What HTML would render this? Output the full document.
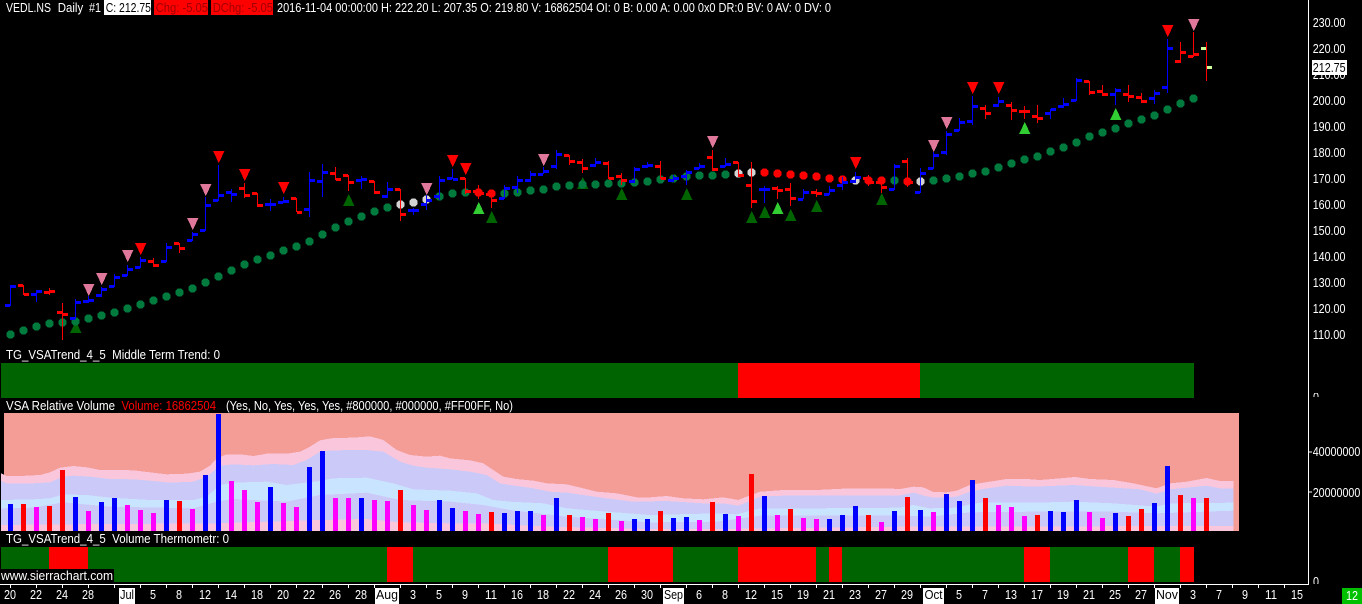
<!DOCTYPE html>
<html><head><meta charset="utf-8"><title>VEDL.NS Daily</title>
<style>
html,body{margin:0;padding:0;background:#000;width:1362px;height:604px;overflow:hidden}
svg{display:block}
text{font-family:"Liberation Sans",sans-serif;font-size:13px;fill:#fff}
.c text{text-anchor:middle}
</style></head><body>
<svg width="1362" height="604" viewBox="0 0 1362 604" xmlns="http://www.w3.org/2000/svg">
<rect width="1362" height="604" fill="#000"/>

<!-- header -->
<text x="6" y="12" textLength="45" lengthAdjust="spacingAndGlyphs">VEDL.NS</text>
<text x="57.7" y="12" textLength="25.5" lengthAdjust="spacingAndGlyphs">Daily</text>
<text x="89" y="12" textLength="12" lengthAdjust="spacingAndGlyphs">#1</text>
<rect x="104" y="0" width="47" height="15" fill="#fff"/>
<text x="105.7" y="12" textLength="45.3" lengthAdjust="spacingAndGlyphs" style="fill:#000">C: 212.75</text>
<rect x="154" y="0" width="54" height="15" fill="#f00"/>
<text x="155.7" y="12" textLength="52.3" lengthAdjust="spacingAndGlyphs" style="fill:#a00000">Chg: -5.05</text>
<rect x="211" y="0" width="62" height="15" fill="#f00"/>
<text x="212.7" y="12" textLength="60.3" lengthAdjust="spacingAndGlyphs" style="fill:#a00000">DChg: -5.05</text>
<text x="277" y="12" textLength="554" lengthAdjust="spacingAndGlyphs">2016-11-04 00:00:00 H: 222.20 L: 207.35 O: 219.80 V: 16862504 OI: 0 B: 0.00 A: 0.00 0x0 DR:0 BV: 0 AV: 0 DV: 0</text>

<!-- triangles -->
<g fill="#e0789c" shape-rendering="crispEdges">
<path d="M83 284h11.5l-5.7 12z"/><path d="M96 273h11.5l-5.7 12z"/><path d="M122 250h11.5l-5.7 12z"/><path d="M187 218h11.5l-5.7 12z"/><path d="M200 184h11.5l-5.7 12z"/><path d="M421 183h11.5l-5.7 12z"/><path d="M538 154h11.5l-5.7 12z"/><path d="M707 136h11.5l-5.7 12z"/><path d="M928 140h11.5l-5.7 12z"/><path d="M941 117h11.5l-5.7 12z"/><path d="M1188 19h11.5l-5.7 12z"/>
</g>
<g fill="#f00" shape-rendering="crispEdges">
<path d="M135 243h11.5l-5.7 12z"/><path d="M213 151h11.5l-5.7 12z"/><path d="M239 169h11.5l-5.7 12z"/><path d="M278 182h11.5l-5.7 12z"/><path d="M447 155h11.5l-5.7 12z"/><path d="M460 163h11.5l-5.7 12z"/><path d="M850 157h11.5l-5.7 12z"/><path d="M967 82h11.5l-5.7 12z"/><path d="M993 82h11.5l-5.7 12z"/><path d="M1162 25h11.5l-5.7 12z"/>
</g>
<g fill="#006400" shape-rendering="crispEdges">
<path d="M70 333h11.5l-5.7-12z"/><path d="M343 206h11.5l-5.7-12z"/><path d="M486 223h11.5l-5.7-12z"/><path d="M577 189h11.5l-5.7-12z"/><path d="M616 200h11.5l-5.7-12z"/><path d="M681 200h11.5l-5.7-12z"/><path d="M746 223h11.5l-5.7-12z"/><path d="M759 218h11.5l-5.7-12z"/><path d="M785 221h11.5l-5.7-12z"/><path d="M811 212h11.5l-5.7-12z"/><path d="M876 205h11.5l-5.7-12z"/>
</g>
<g fill="#32cd32" shape-rendering="crispEdges">
<path d="M473 214h11.5l-5.7-12z"/><path d="M772 214h11.5l-5.7-12z"/><path d="M1019 134h11.5l-5.7-12z"/><path d="M1110 120h11.5l-5.7-12z"/>
</g>

<!-- trend dots -->
<g transform="translate(.5,.5)" fill="none" stroke-width="8.4" stroke-linecap="round" shape-rendering="crispEdges">
<path stroke="#007a3d" d="M10 334h.01M23 330h.01M36 326h.01M49 323h.01M62 322h.01M75 321h.01M88 318h.01M101 315h.01M114 312h.01M127 308h.01M140 304h.01M153 300h.01M166 296h.01M179 292h.01M192 288h.01M205 282h.01M218 276h.01M231 270h.01M244 264h.01M257 259h.01M270 255h.01M283 250h.01M296 246h.01M309 241h.01M322 234h.01M335 227h.01M348 221h.01M361 216h.01M374 211h.01M387 207h.01M439 196h.01M452 193h.01M465 192h.01M504 193h.01M517 192h.01M530 190h.01M543 189h.01M556 186h.01M569 185h.01M582 184h.01M595 184h.01M608 183h.01M621 183h.01M634 182h.01M647 181h.01M660 179h.01M673 178h.01M686 176h.01M699 175h.01M712 175h.01M725 174h.01M894 180h.01M933 180h.01M946 178h.01M959 176h.01M972 173h.01M985 171h.01M998 167h.01M1011 163h.01M1024 159h.01M1037 156h.01M1050 151h.01M1063 147h.01M1076 142h.01M1089 136h.01M1102 132h.01M1115 128h.01M1128 123h.01M1141 119h.01M1154 115h.01M1167 109h.01M1180 103h.01M1193 98h.01"/>
<path stroke="#d3d3d3" d="M400 204h.01M413 202h.01M426 199h.01M738 173h.01M751 172h.01M855 180h.01M920 181h.01"/>
<path stroke="#f00" d="M478 192h.01M491 193h.01M764 172h.01M777 173h.01M790 174h.01M803 175h.01M816 176h.01M829 178h.01M842 179h.01M868 180h.01M881 180h.01M907 181h.01"/>
</g>

<!-- price bars -->
<g fill="none" shape-rendering="crispEdges">
<path transform="translate(.5,0)" stroke="#00f" d="M10 285V306M36 290V302M75 299V319M88 296V303M101 287V297M114 274V287M127 265V276M140 257V268M166 243V262M192 232V241M205 197V231M218 165V201M231 189V202M270 199V211M283 197V203M309 172V217M322 164V197M361 176V189M387 182V198M413 208V215M426 195V210M439 176V200M452 169V179M504 185V199M517 176V193M530 171V182M543 167V174M556 150V169M595 158V167M634 167V183M647 162V168M673 175V182M686 170V185M699 163V169M725 158V167M764 186V203M803 189V199M829 186V195M842 177V190M855 172V183M894 164V190M920 168V193M933 152V169M946 131V155M959 118V131M972 96V125M998 97V107M1050 109V119M1063 98V108M1076 78V101M1115 88V105M1154 90V104M1167 39V93"/>
<path transform="translate(0,.5)" stroke="#00f" stroke-width="3" d="M5 305h5M11 286h5M31 294h5M37 291h5M70 318h5M76 302h5M83 301h5M89 300h5M96 295h5M102 289h5M109 286h5M115 277h5M122 275h5M128 269h5M135 267h5M141 260h5M161 261h5M167 247h5M187 240h5M193 234h5M200 230h5M206 205h5M213 200h5M219 195h5M226 192h5M232 194h5M265 204h5M271 204h5M278 202h5M284 201h5M304 209h5M310 180h5M317 181h5M323 172h5M356 180h5M362 179h5M382 196h5M388 189h5M408 210h5M414 210h5M421 204h5M427 200h5M434 196h5M440 180h5M447 178h5M453 179h5M499 198h5M505 188h5M512 187h5M518 180h5M525 180h5M531 174h5M538 174h5M544 171h5M551 166h5M557 154h5M590 165h5M596 162h5M629 181h5M635 169h5M642 166h5M648 165h5M668 180h5M674 178h5M681 176h5M687 172h5M694 168h5M700 166h5M720 166h5M726 164h5M759 189h5M765 189h5M798 199h5M804 192h5M824 194h5M830 190h5M837 185h5M843 182h5M850 181h5M856 177h5M889 189h5M895 166h5M915 192h5M921 173h5M928 168h5M934 155h5M941 152h5M947 134h5M954 130h5M960 122h5M967 121h5M973 106h5M993 105h5M999 101h5M1045 113h5M1051 109h5M1058 106h5M1064 104h5M1071 100h5M1077 80h5M1110 94h5M1116 90h5M1149 98h5M1155 93h5M1162 87h5M1168 48h5"/>
<path transform="translate(.5,0)" stroke="#f00" d="M23 285V295M49 288V295M62 303V340M153 258V267M179 243V253M244 183V198M257 193V207M296 198V212M335 167V180M348 175V191M374 181V194M400 189V221M465 178V194M478 185V199M491 193V208M569 155V165M582 159V173M608 161V179M621 173V185M660 161V179M712 150V171M738 162V177M751 162V208M777 186V199M790 183V206M816 189V197M868 175V186M881 182V193M907 158V187M985 105V119M1011 102V120M1024 106V119M1037 105V123M1089 81V95M1102 85V96M1128 85V102M1141 93V103M1180 42V63M1193 32V57M1206 42V81"/>
<path transform="translate(0,.5)" stroke="#f00" stroke-width="3" d="M18 285h5M24 294h5M44 292h5M50 291h5M57 312h5M63 314h5M148 261h5M154 265h5M174 243h5M180 248h5M239 188h5M245 195h5M252 193h5M258 205h5M291 198h5M297 212h5M330 173h5M336 179h5M343 175h5M349 182h5M369 181h5M375 192h5M395 189h5M401 214h5M460 178h5M466 191h5M473 191h5M479 193h5M486 194h5M492 200h5M564 155h5M570 161h5M577 162h5M583 168h5M603 163h5M609 178h5M616 176h5M622 180h5M655 166h5M661 178h5M707 157h5M713 169h5M733 162h5M739 175h5M746 185h5M752 201h5M772 188h5M778 190h5M785 189h5M791 198h5M811 192h5M817 193h5M863 178h5M869 182h5M876 182h5M882 187h5M902 161h5M908 182h5M980 108h5M986 113h5M1006 105h5M1012 110h5M1019 111h5M1025 111h5M1032 116h5M1038 118h5M1084 81h5M1090 92h5M1097 91h5M1103 94h5M1123 94h5M1129 96h5M1136 97h5M1142 101h5M1175 61h5M1181 52h5M1188 56h5M1194 54h5"/>
<path transform="translate(0,.5)" stroke="#ccff99" stroke-width="3" d="M1201 48h5M1207 67h5"/>
</g>

<!-- middle term trend -->
<text x="6" y="359" textLength="214" lengthAdjust="spacingAndGlyphs">TG_VSATrend_4_5&#160;&#160;Middle Term Trend: 0</text>
<g shape-rendering="crispEdges">
<rect x="1" y="363" width="1193" height="35" fill="#006400"/>
<rect x="738" y="363" width="182" height="35" fill="#f00"/>
</g>

<!-- VSA relative volume -->
<text x="6" y="410" textLength="109" lengthAdjust="spacingAndGlyphs">VSA Relative Volume</text>
<text x="121.5" y="410" textLength="94.5" lengthAdjust="spacingAndGlyphs" style="fill:#f00">Volume: 16862504</text>
<text x="226" y="410" textLength="287" lengthAdjust="spacingAndGlyphs">(Yes, No, Yes, Yes, Yes, #800000, #000000, #FF00FF, No)</text>
<g shape-rendering="crispEdges">
<rect x="4" y="413" width="1235" height="118" fill="#f49c96"/>
<svg x="0" y="395" width="450" height="209" viewBox="0 0 1350 627" preserveAspectRatio="none">
<polygon fill="#f9c6dc" points="3,235 20,243 60,243 120,240 150,232 180,218 220,213 260,217 300,225 350,225 400,226 450,232 500,238 560,236 600,230 630,212 650,190 680,178 720,178 760,183 800,176 860,176 900,170 930,155 960,136 1000,129 1060,128 1110,124 1150,135 1190,165 1230,180 1280,185 1320,182 1350,190 1350,408 3,408"/>
<polygon fill="#cbc9f7" points="3,258 20,265 100,265 150,262 190,245 220,242 270,245 330,252 400,253 450,257 510,263 580,260 620,245 660,212 700,208 760,211 820,207 880,210 920,195 960,170 1000,166 1100,165 1150,170 1200,200 1240,212 1280,218 1350,223 1350,408 3,408"/>
<polygon fill="#c9e4ff" points="3,315 100,313 150,310 190,298 260,300 330,308 450,315 580,315 620,305 660,270 700,263 800,260 860,270 960,258 1000,250 1100,248 1180,265 1240,283 1350,287 1350,408 3,408"/>
<polygon fill="#cbc9f7" points="3,340 100,338 190,322 330,335 580,340 650,320 700,312 860,320 960,300 1100,293 1200,315 1350,320 1350,408 3,408"/>
<polygon fill="#f9c6dc" points="3,390 190,388 650,385 960,375 1100,372 1200,382 1350,385 1350,408 3,408"/>
</svg>
<svg x="450" y="395" width="450" height="209" viewBox="0 0 1350 627" preserveAspectRatio="none">
<polygon fill="#f9c6dc" points="0,190 60,196 100,205 130,225 160,245 200,252 250,257 290,265 350,268 400,280 440,290 500,295 560,307 600,307 650,303 700,310 760,313 820,307 865,315 890,305 930,290 1000,285 1100,285 1200,280 1300,280 1350,282 1350,408 0,408"/>
<polygon fill="#cbc9f7" points="0,223 60,230 110,240 150,265 180,270 250,280 300,290 350,293 400,300 470,310 550,320 650,318 760,325 820,325 865,332 930,305 1000,302 1190,301 1350,301 1350,408 0,408"/>
<polygon fill="#c9e4ff" points="0,287 80,295 130,315 180,320 280,325 350,340 470,350 600,360 800,355 860,358 930,340 1100,340 1350,338 1350,408 0,408"/>
<polygon fill="#cbc9f7" points="0,320 100,330 180,345 350,365 600,382 800,380 930,362 1350,361 1350,408 0,408"/>
<polygon fill="#f9c6dc" points="0,385 100,385 300,395 600,402 800,402 1350,395 1350,408 0,408"/>
</svg>
<svg x="900" y="395" width="462" height="209" viewBox="0 0 1386 627" preserveAspectRatio="none">
<polygon fill="#f9c6dc" points="0,282 40,275 70,277 100,291 140,292 170,287 210,270 250,263 320,252 380,252 420,255 480,250 525,246 570,252 640,255 700,265 770,280 810,265 860,260 920,249 960,258 1000,258 1000,408 0,408"/>
<polygon fill="#cbc9f7" points="0,301 40,293 80,304 100,308 170,305 210,290 250,282 320,272 400,275 520,270 640,278 720,283 770,296 810,283 920,272 960,280 1000,280 1000,408 0,408"/>
<polygon fill="#c9e4ff" points="0,338 40,330 90,340 170,338 210,328 250,322 400,323 520,320 640,325 770,335 810,325 1000,323 1000,408 0,408"/>
<polygon fill="#cbc9f7" points="0,361 90,365 210,352 400,350 640,350 770,355 1000,347 1000,408 0,408"/>
<polygon fill="#f9c6dc" points="0,395 1000,393 1000,408 0,408"/>
</svg>
<path fill="none" stroke-width="5" stroke="#00f" d="M10.5 504V531M75.5 497V531M101.5 502V531M114.5 498V531M166.5 500V531M205.5 475V531M218.5 414V531M270.5 487V531M309.5 467V531M322.5 451V531M361.5 498V531M439.5 500V531M452.5 508V531M504.5 513V531M517.5 511V531M530.5 511V531M556.5 498V531M634.5 519V531M647.5 519V531M673.5 518V531M686.5 517V531M725.5 514V531M764.5 496V531M829.5 519V531M842.5 515V531M855.5 506V531M894.5 511V531M920.5 510V531M946.5 494V531M959.5 501V531M972.5 480V531M1050.5 511V531M1063.5 512V531M1076.5 500V531M1115.5 513V531M1154.5 503V531M1167.5 466V531"/>
<path fill="none" stroke-width="5" stroke="#f00" d="M23.5 504V531M49.5 506V531M62.5 470V531M179.5 501V531M400.5 490V531M491.5 512V531M569.5 515V531M608.5 513V531M660.5 511V531M712.5 502V531M751.5 474V531M790.5 509V531M868.5 515V531M907.5 497V531M985.5 498V531M1037.5 515V531M1128.5 516V531M1141.5 509V531M1180.5 495V531M1206.5 498V531"/>
<path fill="none" stroke-width="5" stroke="#f0f" d="M36.5 507V531M88.5 511V531M127.5 505V531M140.5 510V531M153.5 513V531M192.5 509V531M231.5 481V531M244.5 490V531M257.5 502V531M283.5 503V531M296.5 507V531M335.5 498V531M348.5 498V531M374.5 500V531M387.5 501V531M413.5 505V531M426.5 510V531M465.5 511V531M478.5 514V531M543.5 515V531M582.5 517V531M595.5 519V531M621.5 521V531M699.5 520V531M738.5 516V531M777.5 515V531M803.5 518V531M816.5 519V531M881.5 522V531M933.5 512V531M998.5 505V531M1011.5 507V531M1024.5 516V531M1089.5 512V531M1102.5 518V531M1193.5 498V531"/>
</g>

<!-- volume thermometer -->
<text x="6" y="543" textLength="223" lengthAdjust="spacingAndGlyphs">TG_VSATrend_4_5&#160;&#160;Volume Thermometr: 0</text>
<g shape-rendering="crispEdges">
<rect x="1" y="547" width="1193" height="35" fill="#006400"/>
<g fill="#f00">
<rect x="49" y="547" width="39" height="35"/><rect x="387" y="547" width="26" height="35"/><rect x="608" y="547" width="65" height="35"/><rect x="738" y="547" width="78" height="35"/><rect x="829" y="547" width="13" height="35"/><rect x="1024" y="547" width="26" height="35"/><rect x="1128" y="547" width="26" height="35"/><rect x="1180" y="547" width="14" height="35"/>
</g>
<rect x="0" y="569" width="114" height="13" fill="#000"/>
</g>
<text x="1" y="580" textLength="112" lengthAdjust="spacingAndGlyphs">www.sierrachart.com</text>

<!-- axes -->
<g shape-rendering="crispEdges" fill="#fff">
<rect x="1308" y="0" width="1" height="585"/>
<rect x="0" y="584" width="1309" height="1"/>
</g>
<path shape-rendering="crispEdges" stroke="#fff" fill="none" d="M10.5 585v3M36.5 585v3M62.5 585v3M88.5 585v3M114.5 585v3M140.5 585v3M166.5 585v3M192.5 585v3M218.5 585v3M244.5 585v3M270.5 585v3M296.5 585v3M322.5 585v3M348.5 585v3M374.5 585v3M400.5 585v3M426.5 585v3M452.5 585v3M478.5 585v3M504.5 585v3M530.5 585v3M556.5 585v3M582.5 585v3M608.5 585v3M634.5 585v3M660.5 585v3M686.5 585v3M712.5 585v3M738.5 585v3M764.5 585v3M790.5 585v3M816.5 585v3M842.5 585v3M868.5 585v3M894.5 585v3M920.5 585v3M946.5 585v3M972.5 585v3M998.5 585v3M1024.5 585v3M1050.5 585v3M1076.5 585v3M1102.5 585v3M1128.5 585v3M1154.5 585v3M1180.5 585v3M1206.5 585v3M1232.5 585v3M1258.5 585v3M1284.5 585v3M1309 452h3M1309 492h3"/>

<!-- price scale -->
<g>
<text x="1312.7" y="27" textLength="32.7" lengthAdjust="spacingAndGlyphs">230.00</text>
<text x="1312.7" y="53" textLength="32.7" lengthAdjust="spacingAndGlyphs">220.00</text>
<text x="1312.7" y="79" textLength="32.7" lengthAdjust="spacingAndGlyphs">210.00</text>
<text x="1312.7" y="105" textLength="32.7" lengthAdjust="spacingAndGlyphs">200.00</text>
<text x="1312.7" y="131" textLength="32.7" lengthAdjust="spacingAndGlyphs">190.00</text>
<text x="1312.7" y="157" textLength="32.7" lengthAdjust="spacingAndGlyphs">180.00</text>
<text x="1312.7" y="183" textLength="32.7" lengthAdjust="spacingAndGlyphs">170.00</text>
<text x="1312.7" y="209" textLength="32.7" lengthAdjust="spacingAndGlyphs">160.00</text>
<text x="1312.7" y="235" textLength="32.7" lengthAdjust="spacingAndGlyphs">150.00</text>
<text x="1312.7" y="261" textLength="32.7" lengthAdjust="spacingAndGlyphs">140.00</text>
<text x="1312.7" y="287" textLength="32.7" lengthAdjust="spacingAndGlyphs">130.00</text>
<text x="1312.7" y="313" textLength="32.7" lengthAdjust="spacingAndGlyphs">120.00</text>
<text x="1312.7" y="339" textLength="32.7" lengthAdjust="spacingAndGlyphs">110.00</text>
</g>
<rect x="1312" y="60" width="35" height="15" fill="#fff" shape-rendering="crispEdges"/>
<text x="1312.7" y="72" textLength="33" lengthAdjust="spacingAndGlyphs" style="fill:#000">212.75</text>
<text x="1312.7" y="456" textLength="47.6" lengthAdjust="spacingAndGlyphs">40000000</text>
<text x="1312.7" y="497" textLength="47.6" lengthAdjust="spacingAndGlyphs">20000000</text>
<svg x="1310" y="393" width="20" height="4"><text x="3" y="8.4" textLength="6" lengthAdjust="spacingAndGlyphs">0</text></svg>
<svg x="1310" y="577" width="20" height="7"><text x="3" y="9" textLength="6" lengthAdjust="spacingAndGlyphs">0</text></svg>

<!-- date axis -->
<g shape-rendering="crispEdges" fill="#fff">
<rect x="119" y="588" width="16" height="16"/><rect x="375" y="588" width="24" height="16"/><rect x="663" y="588" width="21" height="16"/><rect x="923" y="588" width="21" height="16"/><rect x="1155" y="588" width="24" height="16"/>
<rect x="1342" y="588" width="20" height="16" fill="#00c000"/>
</g>
<g class="c">
<text x="10" y="599" textLength="12" lengthAdjust="spacingAndGlyphs">20</text>
<text x="36" y="599" textLength="12" lengthAdjust="spacingAndGlyphs">22</text>
<text x="62" y="599" textLength="12" lengthAdjust="spacingAndGlyphs">24</text>
<text x="88" y="599" textLength="12" lengthAdjust="spacingAndGlyphs">28</text>
<text x="127" y="599" textLength="14" lengthAdjust="spacingAndGlyphs" style="fill:#000">Jul</text>
<text x="153" y="599" textLength="6" lengthAdjust="spacingAndGlyphs">5</text>
<text x="179" y="599" textLength="6" lengthAdjust="spacingAndGlyphs">8</text>
<text x="205" y="599" textLength="12" lengthAdjust="spacingAndGlyphs">12</text>
<text x="231" y="599" textLength="12" lengthAdjust="spacingAndGlyphs">14</text>
<text x="257" y="599" textLength="12" lengthAdjust="spacingAndGlyphs">18</text>
<text x="283" y="599" textLength="12" lengthAdjust="spacingAndGlyphs">20</text>
<text x="309" y="599" textLength="12" lengthAdjust="spacingAndGlyphs">22</text>
<text x="335" y="599" textLength="12" lengthAdjust="spacingAndGlyphs">26</text>
<text x="361" y="599" textLength="12" lengthAdjust="spacingAndGlyphs">28</text>
<text x="387" y="599" textLength="22" lengthAdjust="spacingAndGlyphs" style="fill:#000">Aug</text>
<text x="413" y="599" textLength="6" lengthAdjust="spacingAndGlyphs">3</text>
<text x="439" y="599" textLength="6" lengthAdjust="spacingAndGlyphs">5</text>
<text x="465" y="599" textLength="6" lengthAdjust="spacingAndGlyphs">9</text>
<text x="491" y="599" textLength="12" lengthAdjust="spacingAndGlyphs">11</text>
<text x="517" y="599" textLength="12" lengthAdjust="spacingAndGlyphs">16</text>
<text x="543" y="599" textLength="12" lengthAdjust="spacingAndGlyphs">18</text>
<text x="569" y="599" textLength="12" lengthAdjust="spacingAndGlyphs">22</text>
<text x="595" y="599" textLength="12" lengthAdjust="spacingAndGlyphs">24</text>
<text x="621" y="599" textLength="12" lengthAdjust="spacingAndGlyphs">26</text>
<text x="647" y="599" textLength="12" lengthAdjust="spacingAndGlyphs">30</text>
<text x="673.5" y="599" textLength="19" lengthAdjust="spacingAndGlyphs" style="fill:#000">Sep</text>
<text x="699" y="599" textLength="6" lengthAdjust="spacingAndGlyphs">6</text>
<text x="725" y="599" textLength="6" lengthAdjust="spacingAndGlyphs">8</text>
<text x="751" y="599" textLength="12" lengthAdjust="spacingAndGlyphs">12</text>
<text x="777" y="599" textLength="12" lengthAdjust="spacingAndGlyphs">15</text>
<text x="803" y="599" textLength="12" lengthAdjust="spacingAndGlyphs">19</text>
<text x="829" y="599" textLength="12" lengthAdjust="spacingAndGlyphs">21</text>
<text x="855" y="599" textLength="12" lengthAdjust="spacingAndGlyphs">23</text>
<text x="881" y="599" textLength="12" lengthAdjust="spacingAndGlyphs">27</text>
<text x="907" y="599" textLength="12" lengthAdjust="spacingAndGlyphs">29</text>
<text x="933.5" y="599" textLength="18" lengthAdjust="spacingAndGlyphs" style="fill:#000">Oct</text>
<text x="959" y="599" textLength="6" lengthAdjust="spacingAndGlyphs">5</text>
<text x="985" y="599" textLength="6" lengthAdjust="spacingAndGlyphs">7</text>
<text x="1011" y="599" textLength="12" lengthAdjust="spacingAndGlyphs">13</text>
<text x="1037" y="599" textLength="12" lengthAdjust="spacingAndGlyphs">17</text>
<text x="1063" y="599" textLength="12" lengthAdjust="spacingAndGlyphs">19</text>
<text x="1089" y="599" textLength="12" lengthAdjust="spacingAndGlyphs">21</text>
<text x="1115" y="599" textLength="12" lengthAdjust="spacingAndGlyphs">25</text>
<text x="1141" y="599" textLength="12" lengthAdjust="spacingAndGlyphs">27</text>
<text x="1167" y="599" textLength="22" lengthAdjust="spacingAndGlyphs" style="fill:#000">Nov</text>
<text x="1193" y="599" textLength="6" lengthAdjust="spacingAndGlyphs">3</text>
<text x="1219" y="599" textLength="6" lengthAdjust="spacingAndGlyphs">7</text>
<text x="1245" y="599" textLength="6" lengthAdjust="spacingAndGlyphs">9</text>
<text x="1271" y="599" textLength="12" lengthAdjust="spacingAndGlyphs">11</text>
<text x="1297" y="599" textLength="12" lengthAdjust="spacingAndGlyphs">15</text>
<text x="1352" y="600" textLength="12" lengthAdjust="spacingAndGlyphs">12</text>
</g>
</svg>
</body></html>
